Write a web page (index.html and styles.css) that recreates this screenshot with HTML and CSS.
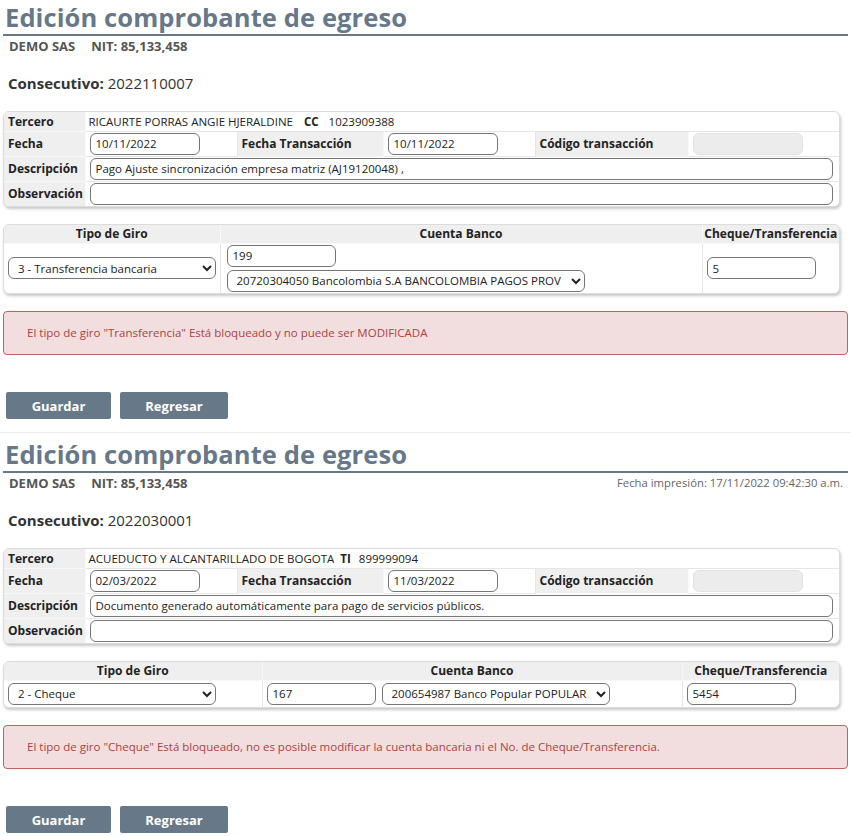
FILE: index.html
```html
<!DOCTYPE html>
<html lang="es">
<head>
<meta charset="utf-8">
<title>Edición comprobante de egreso</title>
<link rel="stylesheet" href="styles.css">
</head>
<body>
<section class="doc">
  <h1 class="title">Edición comprobante de egreso</h1>
  <div class="company">
    <div class="company-name"><span>DEMO SAS</span><span class="nit">NIT: 85,133,458</span></div>
  </div>
  <p class="consec"><b>Consecutivo:</b> 2022110007</p>
  <div class="card">
    <table class="info">
      <colgroup><col class="c1"><col class="c2"><col class="c3"><col class="c4"><col class="c5"><col></colgroup>
      <tr class="r-ter">
        <th>Tercero</th>
        <td colspan="5" class="ter">RICAURTE PORRAS ANGIE HJERALDINE <b class="doc-type">CC</b> <span class="doc-num">1023909388</span></td>
      </tr>
      <tr>
        <th>Fecha</th>
        <td><input class="inp date" value="10/11/2022"></td>
        <th>Fecha Transacción</th>
        <td><input class="inp date" value="10/11/2022"></td>
        <th>Código transacción</th>
        <td><input class="inp date" disabled value=""></td>
      </tr>
      <tr>
        <th>Descripción</th>
        <td colspan="5"><input class="inp wide" value="Pago Ajuste sincronización empresa matriz (AJ19120048) ,"></td>
      </tr>
      <tr class="last">
        <th>Observación</th>
        <td colspan="5"><input class="inp wide" value=""></td>
      </tr>
    </table>
  </div>
  <div class="card">
    <table class="giro giro-a">
      <colgroup><col class="g1"><col class="g2"><col></colgroup>
      <tr class="head"><th>Tipo de Giro</th><th>Cuenta Banco</th><th>Cheque/Transferencia</th></tr>
      <tr class="body">
        <td><select class="sel tipo"><option>3 - Transferencia bancaria</option></select></td>
        <td class="stack"><input class="inp num" value="199"><select class="sel bank-a"><option>20720304050 Bancolombia S.A BANCOLOMBIA PAGOS PROV</option></select></td>
        <td><input class="inp num" value="5"></td>
      </tr>
    </table>
  </div>
  <div class="alert">El tipo de giro "Transferencia" Está bloqueado y no puede ser MODIFICADA</div>
  <div class="actions"><button class="btn btn-save">Guardar</button><button class="btn btn-back">Regresar</button></div>
</section>
<hr class="divider">
<section class="doc doc-b">
  <h1 class="title">Edición comprobante de egreso</h1>
  <div class="company">
    <div class="company-name"><span>DEMO SAS</span><span class="nit">NIT: 85,133,458</span></div>
    <div class="print-date">Fecha impresión: 17/11/2022 09:42:30 a.m.</div>
  </div>
  <p class="consec"><b>Consecutivo:</b> 2022030001</p>
  <div class="card">
    <table class="info">
      <colgroup><col class="c1"><col class="c2"><col class="c3"><col class="c4"><col class="c5"><col></colgroup>
      <tr class="r-ter">
        <th>Tercero</th>
        <td colspan="5" class="ter">ACUEDUCTO Y ALCANTARILLADO DE BOGOTA <b class="doc-type doc-type-b">TI</b> <span class="doc-num">899999094</span></td>
      </tr>
      <tr>
        <th>Fecha</th>
        <td><input class="inp date" value="02/03/2022"></td>
        <th>Fecha Transacción</th>
        <td><input class="inp date" value="11/03/2022"></td>
        <th>Código transacción</th>
        <td><input class="inp date" disabled value=""></td>
      </tr>
      <tr>
        <th>Descripción</th>
        <td colspan="5"><input class="inp wide" value="Documento generado automáticamente para pago de servicios públicos."></td>
      </tr>
      <tr class="last">
        <th>Observación</th>
        <td colspan="5"><input class="inp wide" value=""></td>
      </tr>
    </table>
  </div>
  <div class="card">
    <table class="giro giro-b">
      <colgroup><col class="g1"><col class="g2"><col></colgroup>
      <tr class="head"><th>Tipo de Giro</th><th>Cuenta Banco</th><th>Cheque/Transferencia</th></tr>
      <tr class="body">
        <td><select class="sel tipo"><option>2 - Cheque</option></select></td>
        <td class="inline"><input class="inp num" value="167"><select class="sel bank-b"><option>200654987 Banco Popular POPULAR</option></select></td>
        <td><input class="inp num" value="5454"></td>
      </tr>
    </table>
  </div>
  <div class="alert">El tipo de giro "Cheque" Está bloqueado, no es posible modificar la cuenta bancaria ni el No. de Cheque/Transferencia.</div>
  <div class="actions"><button class="btn btn-save">Guardar</button><button class="btn btn-back">Regresar</button></div>
</section>
</body>
</html>
```

FILE: styles.css
```css
* { box-sizing: border-box; }
html, body { background: #fff; }
body {
  margin: 0;
  font-family: "Open Sans", "Liberation Sans", sans-serif;
  color: #222;
  width: 851px;
  height: 836px;
  overflow: hidden;
}
.doc {
  padding: 0 3px 0 3px;
}
.doc-b { padding-top: 4px; }
.title {
  margin: 0;
  padding: 0 2px;
  font-size: 25.5px;
  line-height: 34px;
  font-weight: 700;
  color: #677889;
  border-bottom: 2px solid #677889;
  letter-spacing: 0.1px;
}
.company {
  display: flex;
  justify-content: space-between;
  align-items: center;
  padding: 2px 5px 0 6px;
  height: 18px;
}
.company-name {
  font-size: 13px;
  font-weight: 700;
  color: #555;
  line-height: 16px;
}
.company-name .nit { margin-left: 16px; }
.print-date {
  font-size: 11.3px;
  color: #666;
  line-height: 14px;
}
.consec {
  margin: 19px 0 0 5px;
  font-size: 15px;
  line-height: 20px;
  color: #333;
}
.consec b { color: #333; }
.card {
  margin-top: 18px;
  width: 837px;
  border: 1px solid #dcdcdc;
  border-radius: 6px;
  box-shadow: 1px 2px 3px rgba(0,0,0,0.22);
  overflow: hidden;
  background: #fff;
}
.card + .card { margin-top: 17px; }
table {
  width: 100%;
  border-collapse: collapse;
  table-layout: fixed;
}
.info .c1 { width: 81px; }
.info .c2 { width: 152px; }
.info .c3 { width: 146px; }
.info .c4 { width: 152px; }
.info .c5 { width: 153px; }
th, td {
  border-bottom: 1px solid #e6e6e6;
  border-right: 1px solid #e6e6e6;
  padding: 0 4px;
  font-size: 12px;
  text-align: left;
  vertical-align: middle;
}
tr > :last-child { border-right: none; }
tr.last th, tr.last td, tr.body td { border-bottom: none; }
th {
  background: #efefef;
  font-weight: 700;
  color: #222;
  border-color: #f8f8f8;
}
.info tr { height: 25px; }
.info tr.r-ter { height: 19px; }
.ter {
  font-size: 11.5px;
  color: #222;
  padding-left: 3px;
}
.doc-type { margin: 0 7px 0 8px; }
.doc-type-b { margin: 0 5px 0 3px; }
.inp, .sel {
  font-family: "Open Sans", "Liberation Sans", sans-serif;
  font-size: 11.5px;
  color: #222;
  height: 22px;
  border: 1px solid #767676;
  border-radius: 6px;
  background: #fff;
  padding: 0 5px;
  vertical-align: middle;
  margin: 0;
}
.inp.date { width: 110px; }
.inp[disabled] {
  background: #ececec;
  border-color: #e2e2e2;
}
.inp.wide { width: 743px; }
.giro .head { height: 18px; }
.giro .head th { text-align: center; padding: 0; }
.giro-a .g1 { width: 216px; }
.giro-a .g2 { width: 482px; }
.giro-a .body { height: 50px; }
.giro-b .g1 { width: 258px; }
.giro-b .g2 { width: 420px; }
.giro-b .body { height: 27px; }
.giro td { padding: 0 4px; }
.sel.tipo { width: 208px; }
.inp.num { width: 109px; }
.stack { padding: 1px 6px !important; }
.stack .inp, .stack .sel { display: block; }
.stack .sel { margin-top: 3px; }
.sel.bank-a { width: 358px; }
.inline .sel { margin-left: 6px; }
.sel.bank-b { width: 228px; }
.alert {
  margin-top: 17px;
  height: 44px;
  border: 1px solid #c1625f;
  border-radius: 4px;
  background: #f2dede;
  color: #a94442;
  font-size: 11.5px;
  line-height: 42px;
  padding-left: 23px;
}
.actions {
  display: flex;
  gap: 9px;
  margin-top: 37px;
  padding-left: 3px;
}
.btn {
  font-family: "Open Sans", "Liberation Sans", sans-serif;
  font-size: 13px;
  font-weight: 700;
  color: #fff;
  background: #677889;
  border: none;
  border-radius: 2px;
  height: 27px;
  padding: 0;
}
.btn-save { width: 105px; }
.btn-back { width: 108px; }
.divider {
  margin: 13px 0 0 0;
  border: none;
  border-top: 1px solid #ececec;
  height: 0;
}
```
